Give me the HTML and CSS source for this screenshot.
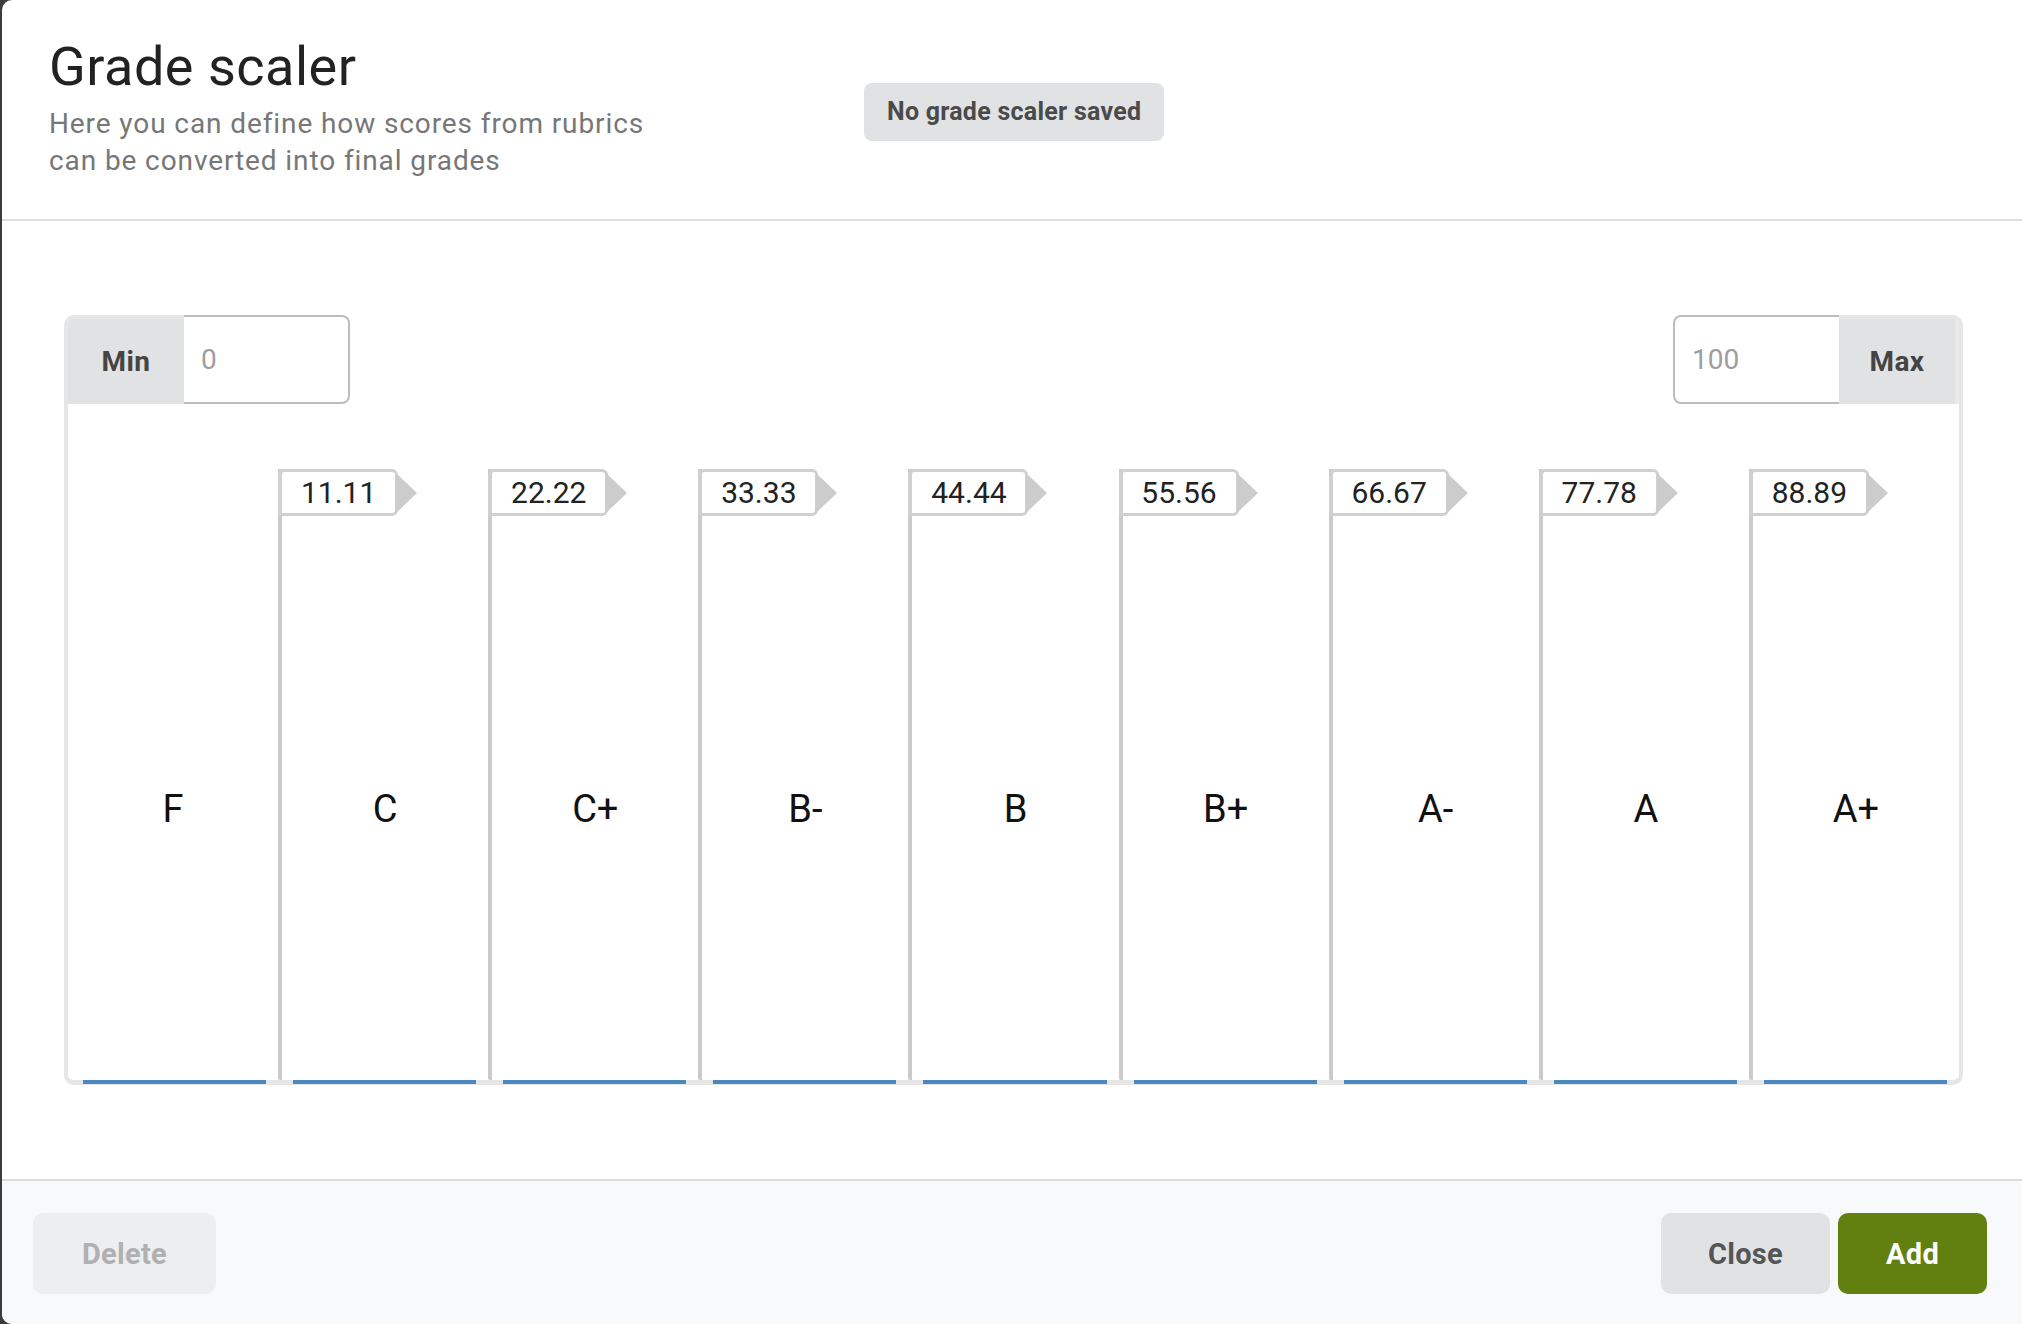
FILE: index.html
```html
<!DOCTYPE html>
<html lang="en">
<head>
<meta charset="utf-8">
<title>Grade scaler</title>
<link rel="stylesheet" href="styles.css">
</head>
<body>
<div class="modal">
  <header class="modal-header">
    <div class="header-text">
      <h1 class="title">Grade scaler</h1>
      <p class="subtitle">Here you can define how scores from rubrics<br>can be converted into final grades</p>
    </div>
    <div class="badge">No grade scaler saved</div>
  </header>

  <main class="modal-body">
    <div class="scaler">
      <div class="controls">
        <div class="input-group">
          <span class="addon addon-min">Min</span>
          <input class="num-input num-min" type="text" placeholder="0">
        </div>
        <div class="input-group">
          <input class="num-input num-max" type="text" placeholder="100">
          <span class="addon addon-max">Max</span>
        </div>
      </div>
      <div class="columns">
        <div class="col first"><div class="tag-spacer"></div><div class="grade">F</div></div>
        <div class="col"><div class="tag">11.11</div><div class="grade">C</div></div>
        <div class="col"><div class="tag">22.22</div><div class="grade">C+</div></div>
        <div class="col"><div class="tag">33.33</div><div class="grade">B-</div></div>
        <div class="col"><div class="tag">44.44</div><div class="grade">B</div></div>
        <div class="col"><div class="tag">55.56</div><div class="grade">B+</div></div>
        <div class="col"><div class="tag">66.67</div><div class="grade">A-</div></div>
        <div class="col"><div class="tag">77.78</div><div class="grade">A</div></div>
        <div class="col"><div class="tag">88.89</div><div class="grade">A+</div></div>
      </div>
    </div>
  </main>

  <footer class="modal-footer">
    <button class="btn btn-delete" type="button">Delete</button>
    <button class="btn btn-close" type="button">Close</button>
    <button class="btn btn-add" type="button">Add</button>
  </footer>
</div>
</body>
</html>
```

FILE: styles.css
```css
* { box-sizing: border-box; }

html, body {
  margin: 0;
  padding: 0;
}

body {
  background: #3c3c3c;
  font-family: Roboto, "Liberation Sans", sans-serif;
  width: 2022px;
  height: 1324px;
  overflow: hidden;
}

.modal {
  margin-left: 2px;
  width: 2020px;
  height: 1324px;
  background: #ffffff;
  border-radius: 10px 0 0 10px;
  overflow: hidden;
  display: flex;
  flex-direction: column;
}

/* Header */
.modal-header {
  display: flex;
  align-items: flex-start;
  padding: 34px 0 40px 47px;
  border-bottom: 2px solid #dedede;
}

.header-text {
  width: 815px;
}

.title {
  margin: 0;
  font-size: 54px;
  line-height: 65px;
  font-weight: 400;
  letter-spacing: 0.5px;
  color: #222222;
}

.subtitle {
  margin: 6px 0 0 0;
  font-size: 28px;
  line-height: 37px;
  letter-spacing: 0.9px;
  color: #777777;
}

.badge {
  margin-top: 49px;
  height: 58px;
  padding: 0 23px;
  line-height: 58px;
  background: #e1e2e4;
  border-radius: 8px;
  color: #4a4a4a;
  font-size: 25px;
  font-weight: 700;
  letter-spacing: 0.25px;
}

/* Body */
.modal-body {
  padding: 94px 59px 94px 62px;
}

.scaler {
  height: 770px;
  border: 4px solid #e6e6e6;
  border-top: 0;
  border-bottom-width: 5px;
  border-radius: 10px;
  display: flex;
  flex-direction: column;
}

.controls {
  height: 89px;
  display: flex;
  justify-content: space-between;
  align-items: flex-start;
}

.input-group {
  display: flex;
  height: 89px;
}

.addon {
  width: 116px;
  height: 89px;
  border-top: 4px solid #e6e6e6;
  background: #e1e2e4;
  color: #444444;
  font-size: 28px;
  font-weight: 700;
  letter-spacing: 0.5px;
  display: flex;
  align-items: center;
  justify-content: center;
}

.addon-min {
  border-top-left-radius: 6px;
}

.addon-max {
  width: 120px;
  border-right: 4px solid #e9e9e9;
  border-top-right-radius: 6px;
}

.num-input {
  width: 166px;
  height: 89px;
  border: 2px solid #bdbdbd;
  background: #ffffff;
  padding: 0 0 0 17px;
  font-family: Roboto, "Liberation Sans", sans-serif;
  font-size: 28px;
  color: #333333;
  outline: none;
}

.num-input::placeholder {
  color: #9e9e9e;
}

.num-min {
  border-left: 0;
  border-radius: 0 8px 8px 0;
}

.num-max {
  border-right: 0;
  border-radius: 8px 0 0 8px;
}

.columns {
  flex: 1;
  display: flex;
  padding-top: 65px;
}

.col {
  position: relative;
  flex: none;
  width: calc(100% / 9);
  display: flex;
  flex-direction: column;
  border-left: 4px solid #cbcbcb;
  border-bottom-left-radius: 2px;
}

.col.first {
  border-left: 0;
}

.col::after {
  content: "";
  position: absolute;
  left: 11px;
  right: 12px;
  bottom: -4px;
  height: 4px;
  background: #4a88bd;
}

.col.first::after {
  left: 15px;
}

.tag-spacer {
  height: 47px;
}

.tag {
  position: relative;
  width: 120px;
  height: 47px;
  margin-left: -4px;
  border: 3px solid #d0d0d0;
  border-left-width: 4px;
  border-radius: 6px 6px 6px 0;
  background: #ffffff;
  font-size: 30px;
  line-height: 41px;
  text-align: center;
  color: #222222;
}

.tag::after {
  content: "";
  position: absolute;
  left: 100%;
  top: 50%;
  margin-left: 1px;
  transform: translateY(-50%);
  border-left: 21px solid #cccccc;
  border-top: 20px solid transparent;
  border-bottom: 20px solid transparent;
}

.grade {
  flex: 1;
  display: flex;
  align-items: center;
  justify-content: center;
  padding-top: 22px;
  font-size: 38px;
  color: #111111;
}

/* Footer */
.modal-footer {
  flex: 1;
  display: flex;
  align-items: flex-start;
  gap: 8px;
  padding: 32px 35px 0 31px;
  background: #f8f9fa;
  border-top: 2px solid #dcdcdc;
}

.btn {
  height: 81px;
  border: 0;
  border-radius: 10px;
  font-family: Roboto, "Liberation Sans", sans-serif;
  font-size: 29px;
  font-weight: 700;
  letter-spacing: 0.3px;
  padding: 0;
}

.btn-delete {
  width: 183px;
  background: #edeef0;
  color: #b0b0b0;
}

.btn-close {
  width: 169px;
  margin-left: auto;
  background: #e1e2e4;
  color: #555555;
}

.btn-add {
  width: 149px;
  background: #62800f;
  color: #ffffff;
}
```
